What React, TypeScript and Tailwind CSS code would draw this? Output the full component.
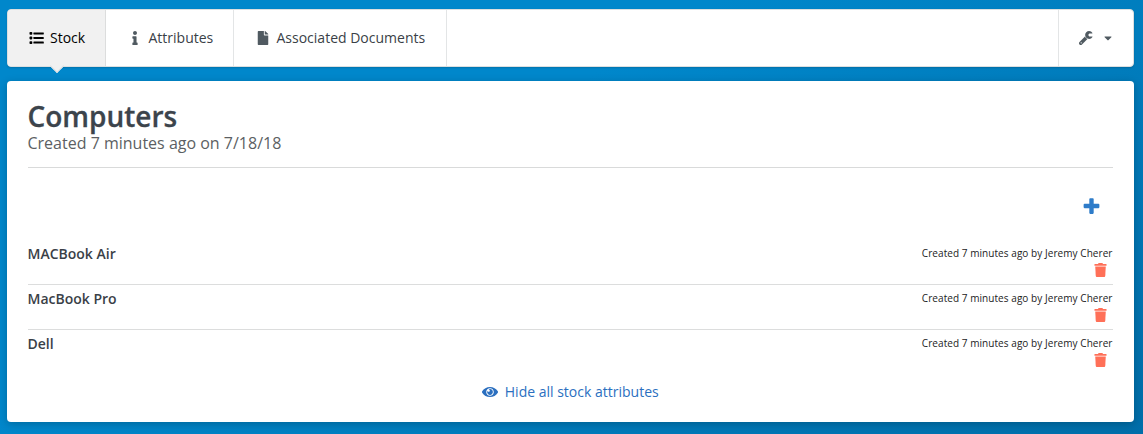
import React from "react";
import { FaCaretDown, FaFile, FaInfo } from "react-icons/fa";

const items = ["MACBook Air", "MacBook Pro", "Dell"];

type IconProps = { className?: string };

function ListIcon({ className }: IconProps) {
  return (
    <svg viewBox="0 0 15 14" fill="currentColor" className={className}>
      <rect x="0.5" y="1" width="2.8" height="2.8" rx="0.8" />
      <rect x="0.5" y="5.6" width="2.8" height="2.8" rx="0.8" />
      <rect x="0.5" y="10.2" width="2.8" height="2.8" rx="0.8" />
      <rect x="4.4" y="1.4" width="10.4" height="2" rx="0.4" />
      <rect x="4.4" y="6" width="10.4" height="2" rx="0.4" />
      <rect x="4.4" y="10.6" width="10.4" height="2" rx="0.4" />
    </svg>
  );
}

function WrenchIcon({ className }: IconProps) {
  return (
    <svg viewBox="0 0 512 512" fill="currentColor" className={className}>
      <path d="M481.156 200c9.3 0 15.12 10.155 10.325 18.124C466.295 259.992 420.419 288 368 288c-79.222 0-143.501-63.974-143.997-143.079C223.505 65.469 288.548-.001 368.002 0c52.362.001 98.196 27.949 123.4 69.743C496.24 77.766 490.523 88 481.154 88H376l-40 56 40 56h105.156zm-171.649 93.003L109.255 493.255c-24.994 24.993-65.515 24.994-90.51 0-24.993-24.994-24.993-65.516 0-90.51L218.991 202.5c16.16 41.197 49.303 74.335 90.516 90.503zM104 432c0-13.255-10.745-24-24-24s-24 10.745-24 24 10.745 24 24 24 24-10.745 24-24z" />
    </svg>
  );
}

function PlusIcon({ className }: IconProps) {
  return (
    <svg viewBox="0 0 448 512" fill="currentColor" className={className}>
      <path d="M448 294.2v-76.4c0-13.3-10.7-24-24-24H286.2V56c0-13.3-10.7-24-24-24h-76.4c-13.3 0-24 10.7-24 24v137.8H24c-13.3 0-24 10.7-24 24v76.4c0 13.3 10.7 24 24 24h137.8V456c0 13.3 10.7 24 24 24h76.4c13.3 0 24-10.7 24-24V318.2H424c13.3 0 24-10.7 24-24z" />
    </svg>
  );
}

function TrashIcon({ className }: IconProps) {
  return (
    <svg viewBox="0 0 448 512" fill="currentColor" className={className}>
      <path d="M0 84V56c0-13.3 10.7-24 24-24h112l9.4-18.7c4-8.2 12.3-13.3 21.4-13.3h114.3c9.1 0 17.4 5.1 21.5 13.3L312 32h112c13.3 0 24 10.7 24 24v28c0 6.6-5.4 12-12 12H12C5.4 96 0 90.6 0 84z" />
      <path d="M416 140l-18 326c-1.500 26-20 46-46 46H96c-26 0-44.500-20-46-46L32 140c0-6.600 5.400-12 12-12h360c6.600 0 12 5.400 12 12z" />
    </svg>
  );
}

function EyeIcon({ className }: IconProps) {
  return (
    <svg viewBox="0 0 576 512" fill="currentColor" className={className}>
      <path d="M569.354 231.631C512.969 135.949 407.81 72 288 72 168.14 72 63.004 135.994 6.646 231.631a47.999 47.999 0 0 0 0 48.739C63.031 376.051 168.19 440 288 440c119.86 0 224.996-63.994 281.354-159.631a47.997 47.997 0 0 0 0-48.738zM288 392c-75.162 0-136-60.827-136-136 0-75.162 60.826-136 136-136 75.162 0 136 60.826 136 136 0 75.162-60.826 136-136 136zm104-136c0 57.438-46.562 104-104 104s-104-46.562-104-104c0-17.708 4.431-34.379 12.236-48.973l-.001.032c0 23.651 19.173 42.823 42.824 42.823s42.824-19.173 42.824-42.823c0-23.651-19.173-42.824-42.824-42.824l-.032.001C253.621 156.431 270.292 152 288 152c57.438 0 104 46.562 104 104z" />
    </svg>
  );
}

function StockRow({ name }: { name: string }) {
  return (
    <li className="flex h-[45px] justify-between border-t border-[#dcdddd] first:border-t-transparent">
      <span className="pt-[4px] text-[14px] leading-[20px] font-semibold text-[#3a3f47]">{name}</span>
      <div className="flex flex-col items-end">
        <span className="pt-[5px] pr-[0.5px] text-[10px] leading-[16px] tracking-[0.06px] text-[#222]">
          Created 7 minutes ago by Jeremy Cherer
        </span>
        <button className="mt-[2px] mr-[6px] text-[#ff7058]" aria-label="Delete">
          <TrashIcon className="h-[14px] w-[13px]" />
        </button>
      </div>
    </li>
  );
}

export default function App() {
  return (
    <div className="h-[434px] bg-linear-[150deg,#0087cb_38%,#006ea9] pt-[9px] pr-[9px] pl-[7px] font-['Open_Sans','Noto_Sans',sans-serif]">
      <nav className="flex h-[58px] rounded border border-[#dcdfe0] bg-white text-[14px] leading-[20px] text-[#3a3f47] shadow-[0_1px_2px_rgba(0,0,0,0.15)]">
        <a className="relative flex w-[98px] items-center rounded-l-[3px] border-r border-[#dcdddd] bg-[#f1f1f1] pl-[21px] text-black">
          <ListIcon className="mr-[6px] h-[14px] w-[15px]" />
          Stock
          <span className="absolute top-[51px] left-[44px] h-[10px] w-[10px] rotate-45 border-r border-b border-[#dcdfe0] bg-[#f1f1f1]" />
        </a>
        <a className="flex w-[128px] items-center border-r border-[#e3e5e6] pl-[22px]">
          <FaInfo className="mr-[6.5px] h-[14px] w-[14px] text-[#505a61]" />
          Attributes
        </a>
        <a className="flex w-[213px] items-center border-r border-[#e3e5e6] pl-[22px]">
          <FaFile className="mr-[6.5px] h-[14px] w-[14px] text-[#505a61]" />
          Associated Documents
        </a>
        <button className="ml-auto flex w-[75px] items-center border-l border-[#e3e5e6] pl-[20px] text-[#505a61]" aria-label="Settings">
          <WrenchIcon className="h-[14px] w-[14px]" />
          <FaCaretDown className="ml-[9px] h-[12px] w-[12px]" />
        </button>
      </nav>

      <main className="mt-[14px] h-[341px] rounded bg-white pt-[17px] pr-[21px] pl-[20.5px] shadow-[0_2px_8px_rgba(0,0,0,0.22)]">
        <h1 className="text-[28px] leading-[36px] font-semibold text-[#3c444c] [-webkit-text-stroke:0.3px]">Computers</h1>
        <p className="text-[16px] leading-[18px] text-[#5c5f63]">Created 7 minutes ago on 7/18/18</p>
        <hr className="mt-[15px] border-[#d9dada]" />
        <div className="flex h-[71px] justify-end pt-[29px] pr-[13px] text-[#2e7cc9]">
          <PlusIcon className="h-[18px] w-[17px]" />
        </div>
        <ul>
          {items.map((name) => (
            <StockRow key={name} name={name} />
          ))}
        </ul>
        <a className="mt-[8px] flex items-center justify-center text-[14px] leading-[20px] text-[#2b6fbf]">
          <EyeIcon className="mr-[7px] h-[16px] w-[16px]" />
          Hide all stock attributes
        </a>
      </main>
    </div>
  );
}
